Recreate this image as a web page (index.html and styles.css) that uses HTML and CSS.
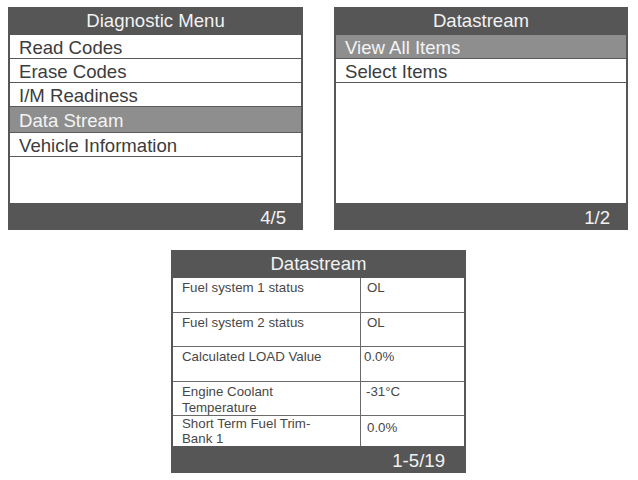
FILE: index.html
```html
<!DOCTYPE html>
<html>
<head>
<meta charset="utf-8">
<link rel="stylesheet" href="styles.css">
</head>
<body>
<div class="page">
  <div class="top">
    <section class="screen s1">
      <div class="hdr">Diagnostic Menu</div>
      <div class="body">
        <div class="item">Read Codes</div>
        <div class="item">Erase Codes</div>
        <div class="item">I/M Readiness</div>
        <div class="item sel tall">Data Stream</div>
        <div class="item">Vehicle Information</div>
      </div>
      <div class="ftr">4/5</div>
    </section>
    <section class="screen s2">
      <div class="hdr">Datastream</div>
      <div class="body">
        <div class="item sel">View All Items</div>
        <div class="item">Select Items</div>
      </div>
      <div class="ftr">1/2</div>
    </section>
  </div>
  <div class="bottom">
    <section class="screen s3">
      <div class="hdr">Datastream</div>
      <div class="table">
        <div class="cell lbl r1">Fuel system 1 status</div>
        <div class="cell val r1">OL</div>
        <div class="cell lbl r2">Fuel system 2 status</div>
        <div class="cell val r2">OL</div>
        <div class="cell lbl r3">Calculated LOAD Value</div>
        <div class="cell val r3 tight">0.0%</div>
        <div class="cell lbl r4">Engine Coolant<br>Temperature</div>
        <div class="cell val r4 mid">-31°C</div>
        <div class="cell lbl r5 last">Short Term Fuel Trim-<br>Bank 1</div>
        <div class="cell val r5 last low">0.0%</div>
      </div>
      <div class="ftr">1-5/19</div>
    </section>
  </div>
</div>
</body>
</html>
```

FILE: styles.css
```css
html, body {
  margin: 0;
  padding: 0;
  background: #ffffff;
}
body {
  font-family: "Liberation Sans", Arial, sans-serif;
  color: #3e3e3e;
}
.page {
  width: 638px;
  height: 480px;
  padding-top: 7px;
  box-sizing: border-box;
}
.top {
  display: flex;
  gap: 31px;
  padding-left: 8px;
}
.bottom {
  display: flex;
  padding-left: 171px;
  padding-top: 20px;
}
.screen {
  display: flex;
  flex-direction: column;
  background: #565656;
}
.s1 { width: 295px; height: 223px; }
.s2 { width: 294px; height: 223px; }
.s3 { width: 295px; height: 223px; }
.hdr {
  height: 28px;
  line-height: 28px;
  text-align: center;
  color: #f2f2f2;
  font-size: 18.6px;
  flex: none;
}
.body {
  flex: 1;
  background: #ffffff;
  margin: 0 2px;
}
.item {
  height: 23px;
  line-height: 25px;
  border-bottom: 1px solid #5a5a5a;
  padding-left: 9px;
  font-size: 18.6px;
  color: #3c3c3c;
  overflow: hidden;
}
.item.tall {
  height: 25px;
  line-height: 27px;
}
.item.sel {
  background: #8e8e8e;
  color: #f4f4f4;
}
.ftr {
  height: 27px;
  line-height: 29px;
  text-align: right;
  padding-right: 17px;
  color: #f2f2f2;
  font-size: 18.6px;
  flex: none;
}
.s2 .ftr { padding-right: 18px; }
.s3 .ftr { padding-right: 21px; }
.table {
  flex: 1;
  background: #ffffff;
  margin: 0 2px;
  display: grid;
  grid-template-columns: 188px 1fr;
  grid-template-rows: 35px 34px 35px 34px 30px;
  font-size: 13.3px;
  line-height: 16px;
  color: #474747;
}
.cell {
  border-bottom: 1px solid #6a6a6a;
  padding-top: 2px;
}
.cell.last {
  border-bottom: none;
}
.lbl {
  padding-left: 9px;
  border-right: 1px solid #6a6a6a;
}
.val {
  padding-left: 6px;
}
.val.tight { padding-left: 3px; }
.val.mid { padding-left: 5px; }
.lbl.r5 {
  padding-top: 0;
  line-height: 15px;
}
.val.low { padding-top: 4px; }
```
